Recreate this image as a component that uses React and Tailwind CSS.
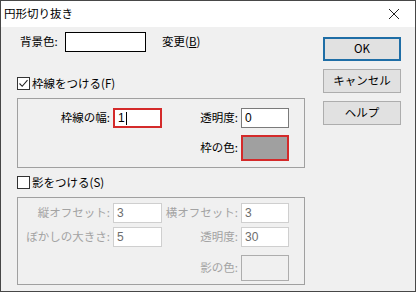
import React from 'react'

const font = { fontFamily: '"Noto Sans CJK JP", "Noto Sans", sans-serif' }

const Check = ({ checked }) => (
  <div className="w-[13px] h-[13px] border border-[#333333] bg-white flex items-center justify-center">
    {checked && (
      <svg width="11" height="11" viewBox="0 0 11 11">
        <path d="M1.5 5.5 L4.2 8.3 L9.5 2.2" fill="none" stroke="#222222" strokeWidth="1.1" />
      </svg>
    )}
  </div>
)

const Label = ({ children, dim }) => (
  <div className={'flex items-center justify-end pr-[3px] text-[11.5px] leading-none ' + (dim ? 'text-[#a3a3a3]' : 'text-black')}>
    {children}
  </div>
)

const Field = ({ value, red, dim, caret }) => (
  <div
    className={
      'flex items-center pl-[3px] bg-white text-[12px] leading-none font-["Liberation_Sans",sans-serif] ' +
      (red ? 'border-2 border-[#d42a2a] ' : dim ? 'border border-[#cfcfcf] text-[#6d6d6d] ' : 'border border-[#7a7a7a] text-black ')
    }
  >
    {value}
    {caret && <span className="ml-[1px] w-[1px] h-[13px] bg-black" />}
  </div>
)

const Btn = ({ children, primary }) => (
  <button
    className={
      'w-[78px] h-[24px] bg-[#e1e1e1] text-[11.5px] leading-none text-black flex items-center justify-center ' +
      (primary ? 'border-2 border-[#1f6ea6]' : 'border border-[#adadad]')
    }
  >
    {children}
  </button>
)

export default function App() {
  return (
    <div className="w-[417px] h-[293px] bg-white" style={font}>
      <div className="w-[416px] h-[292px] border border-[#474747] bg-[#f0f0f0] flex flex-col">
        <div className="h-[26px] bg-white flex items-center justify-between pl-[3px] pr-[15px]">
          <span className="text-[11.5px] leading-none text-black">円形切り抜き</span>
          <svg width="12" height="12" viewBox="0 0 12 12">
            <path d="M1 1 L11 11 M11 1 L1 11" stroke="#222222" strokeWidth="1" />
          </svg>
        </div>

        <div className="flex flex-1">
          <div className="w-[304px] pl-[16px]">
            <div className="mt-[5px] h-[20px] flex items-center">
              <span className="w-[48px] pl-[3px] text-[11.5px] leading-none">背景色:</span>
              <div className="w-[81px] h-[20px] border border-black bg-white" />
              <span className="ml-[16px] text-[11.5px] leading-none">
                変更(<span className="underline">B</span>)
              </span>
            </div>

            <div className="mt-[25px] h-[13px] flex items-center">
              <Check checked />
              <span className="ml-[2px] text-[11.5px] leading-none">枠線をつける(F)</span>
            </div>

            <div className="mt-[8px] w-[288px] h-[70px] border border-[#a0a0a0] pt-[9px] grid grid-cols-[95px_49px_79px_48px] grid-rows-[20px_26px] gap-y-[7px]">
              <Label>枠線の幅:</Label>
              <Field value="1" red caret />
              <Label>透明度:</Label>
              <Field value="0" />
              <div />
              <div />
              <Label>枠の色:</Label>
              <div className="border-2 border-[#d42a2a] bg-[#a0a0a0]" />
            </div>

            <div className="mt-[8px] h-[13px] flex items-center">
              <Check />
              <span className="ml-[2px] text-[11.5px] leading-none">影をつける(S)</span>
            </div>

            <div className="mt-[8px] w-[288px] h-[88px] border border-[#a0a0a0] pt-[5px] grid grid-cols-[95px_49px_79px_48px] grid-rows-[20px_20px_30px] gap-y-[4px]">
              <Label dim>縦オフセット:</Label>
              <Field value="3" dim />
              <Label dim>横オフセット:</Label>
              <Field value="3" dim />
              <Label dim>ぼかしの大きさ:</Label>
              <Field value="5" dim />
              <Label dim>透明度:</Label>
              <Field value="30" dim />
              <div />
              <div />
              <div className="pt-[4px] flex">
                <div className="flex-1 flex items-center justify-end pr-[3px] text-[11.5px] leading-none text-[#a3a3a3]">影の色:</div>
              </div>
              <div className="pt-[4px] flex">
                <div className="flex-1 h-[26px] border border-[#adadad] bg-[#f0f0f0]" />
              </div>
            </div>
          </div>

          <div className="ml-[18px] mt-[10px] flex flex-col gap-[8px]">
            <Btn primary>OK</Btn>
            <Btn>キャンセル</Btn>
            <Btn>ヘルプ</Btn>
          </div>
        </div>
      </div>
    </div>
  )
}
